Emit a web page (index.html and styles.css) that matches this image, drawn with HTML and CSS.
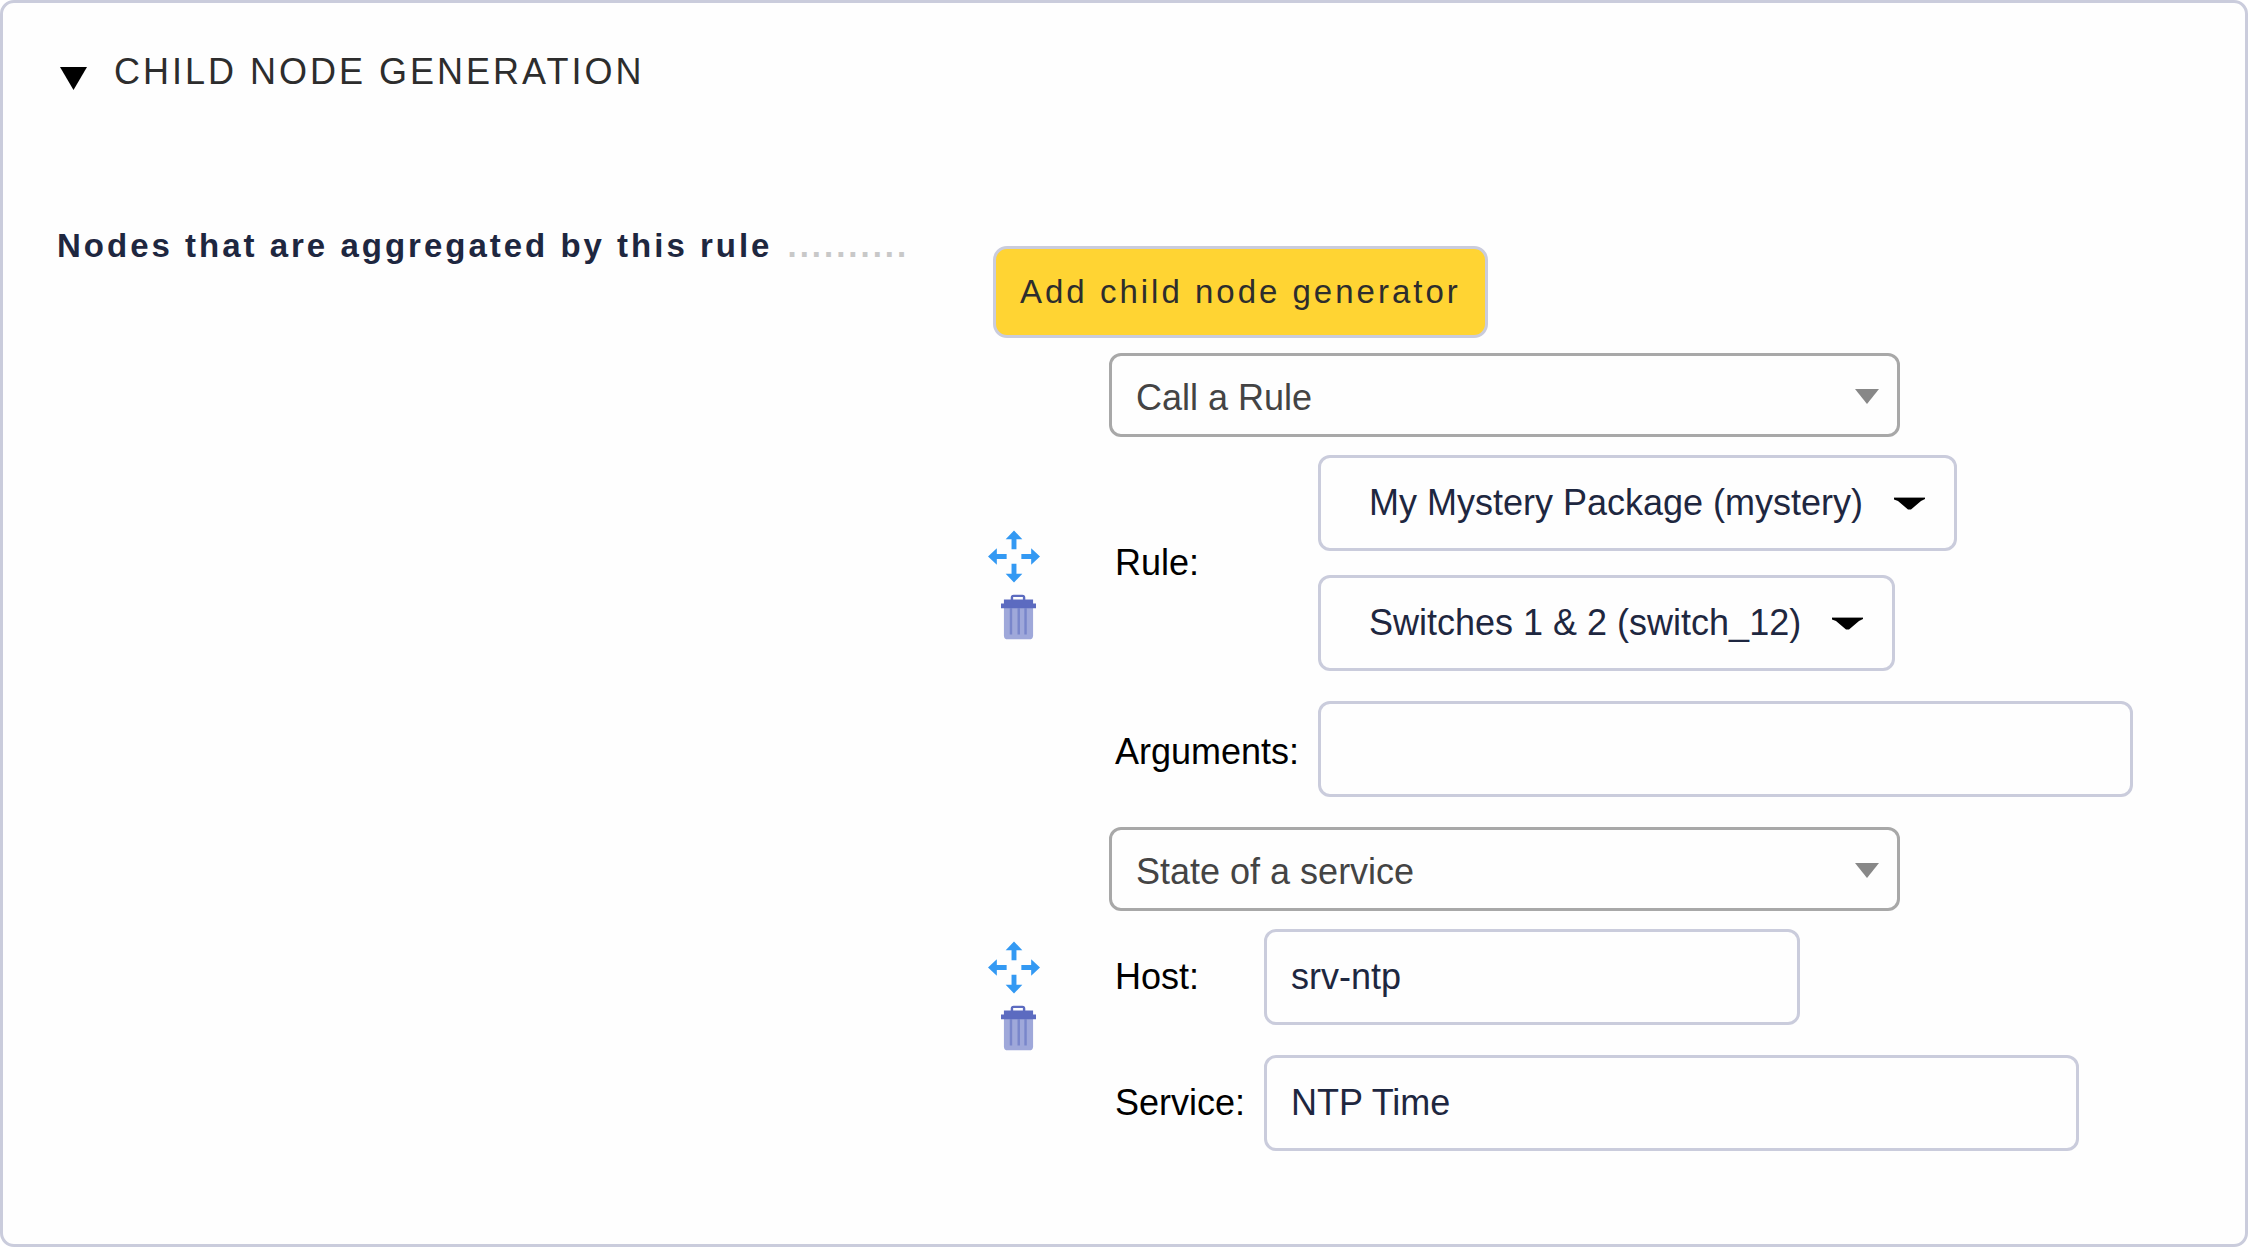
FILE: index.html
```html
<!DOCTYPE html>
<html lang="en">
<head>
<meta charset="utf-8">
<title>Child node generation</title>
<link rel="stylesheet" href="styles.css">
</head>
<body>
<svg width="0" height="0" class="defs">
  <symbol id="move" viewBox="0 0 53 53">
    <path fill="#3399f3" d="M26.5 0 35 9H29V19H24V9H18ZM26.5 53 18 44H24V34H29V44H35ZM0 26.500 9 18V24H19V29H9V35ZM53 26.500 44 35V29H34V24H44V18Z"/>
  </symbol>
  <symbol id="trash" viewBox="0 0 36 46">
    <path fill="#9fa8da" d="M3 13H33V42Q33 46 29 46H7Q3 46 3 42Z"/>
    <path fill="#7986cb" d="M9 14H11.500V41H9ZM17 14H19.500V41H17ZM24 14H26.500V41H24Z"/>
    <path fill="#5c6bc0" d="M0 9H3V5H10V3Q10 0 13 0H22Q25 0 25 3V5H33V9H36V14H0ZM12.500 2.500V5H22.500V2.500Z"/>
  </symbol>
  <symbol id="caret" viewBox="0 0 31 13">
    <path fill="#999" d="M0 0H31V1H0Z"/>
    <path d="M0 1H31V2L27 4 17 12.500H14L4 4 0 2.500Z"/>
  </symbol>
</svg>
<main class="panel">
  <header class="head">
    <svg class="fold" width="27" height="23"><path d="M0 0H27L13.500 23Z"/></svg>
    <h1>CHILD NODE GENERATION</h1>
  </header>
  <div class="body">
    <div class="legend">Nodes that are aggregated by this rule<span class="dots">..........</span></div>
    <div class="content">
      <button class="add">Add child node generator</button>
      <section class="generator">
        <div class="tools">
          <svg class="move"><use href="#move"/></svg>
          <svg class="trash"><use href="#trash"/></svg>
        </div>
        <div class="form">
          <div class="select"><span>Call a Rule</span><svg width="24" height="15"><path d="M0 0H24L12 15Z"/></svg></div>
          <div class="row rule">
            <label>Rule:</label>
            <div class="stack">
              <div class="drop">My Mystery Package (mystery)<svg class="caret"><use href="#caret"/></svg></div>
              <div class="drop">Switches 1 &amp; 2 (switch_12)<svg class="caret"><use href="#caret"/></svg></div>
            </div>
          </div>
          <div class="row rule">
            <label class="low">Arguments:</label>
            <div class="field wide"></div>
          </div>
        </div>
      </section>
      <section class="generator">
        <div class="tools short">
          <svg class="move"><use href="#move"/></svg>
          <svg class="trash"><use href="#trash"/></svg>
        </div>
        <div class="form">
          <div class="select"><span>State of a service</span><svg width="24" height="15"><path d="M0 0H24L12 15Z"/></svg></div>
          <div class="row service">
            <label>Host:</label>
            <div class="field host">srv-ntp</div>
          </div>
          <div class="row service">
            <label>Service:</label>
            <div class="field wide">NTP Time</div>
          </div>
        </div>
      </section>
    </div>
  </div>
</main>
</body>
</html>
```
FILE: styles.css
```css
* { box-sizing: border-box; }
body {
  margin: 0;
  background: #fff;
  color: #000;
  font: 36px/42px "Liberation Sans", Arial, sans-serif;
}
svg { display: block; flex: none; }
.defs { position: absolute; }
.panel {
  width: 2248px;
  height: 1247px;
  padding: 48px 0 0 54px;
  border: 3px solid #caccdc;
  border-radius: 14px;
  background: #fefefe;
}
.head { display: flex; height: 195px; }
.fold { margin: 16px 27px 0 3px; }
h1 {
  margin: 0;
  font-size: 36px;
  font-weight: 400;
  letter-spacing: 3px;
  color: #2d2d2d;
}
.body { display: flex; }
.legend {
  width: 936px;
  font-size: 33px;
  line-height: 0;
  font-weight: 700;
  letter-spacing: 3px;
  color: #1e2740;
}
.dots { margin-left: 15px; color: #c8c8c8; }
.add {
  display: block;
  height: 92px;
  padding: 0 24px;
  margin: 0 0 15px;
  border: 3px solid #caccdc;
  border-radius: 14px;
  background: #ffd433;
  color: #2d2d2d;
  font: 33px "Liberation Sans", Arial, sans-serif;
  letter-spacing: 3px;
}
.generator { display: flex; margin-bottom: 30px; }
.tools {
  display: flex;
  flex-direction: column;
  justify-content: center;
  gap: 11px;
  width: 121px;
  margin-left: -5px;
  padding-top: 20px;
}
.tools.short { padding-top: 14px; }
.move { width: 52px; height: 53px; }
.trash { width: 35px; height: 46px; margin-left: 13px; }
.select {
  display: flex;
  align-items: center;
  justify-content: space-between;
  width: 791px;
  height: 84px;
  margin-bottom: 18px;
  padding: 0 18px 0 24px;
  border: 3px solid #a8a8a8;
  border-radius: 12px;
  color: #444;
}
.select span { padding-top: 5px; }
.select svg { margin-top: 2px; }
.select path { fill: #888; }
.row { display: flex; align-items: center; padding-left: 6px; }
.row + .row { margin-top: 30px; }
.rule label { width: 203px; }
.service label { width: 149px; }
label.low { padding-top: 5px; }
.stack { display: flex; flex-direction: column; align-items: flex-start; gap: 24px; }
.drop, .field {
  display: flex;
  align-items: center;
  height: 96px;
  border: 3px solid #caccdc;
  border-radius: 12px;
  color: #1e2740;
}
.drop { padding: 0 29px 0 48px; }
.caret { width: 31px; height: 13px; margin-left: 31px; }
.field { padding-left: 24px; }
.wide { width: 815px; }
.host { width: 536px; }
```
